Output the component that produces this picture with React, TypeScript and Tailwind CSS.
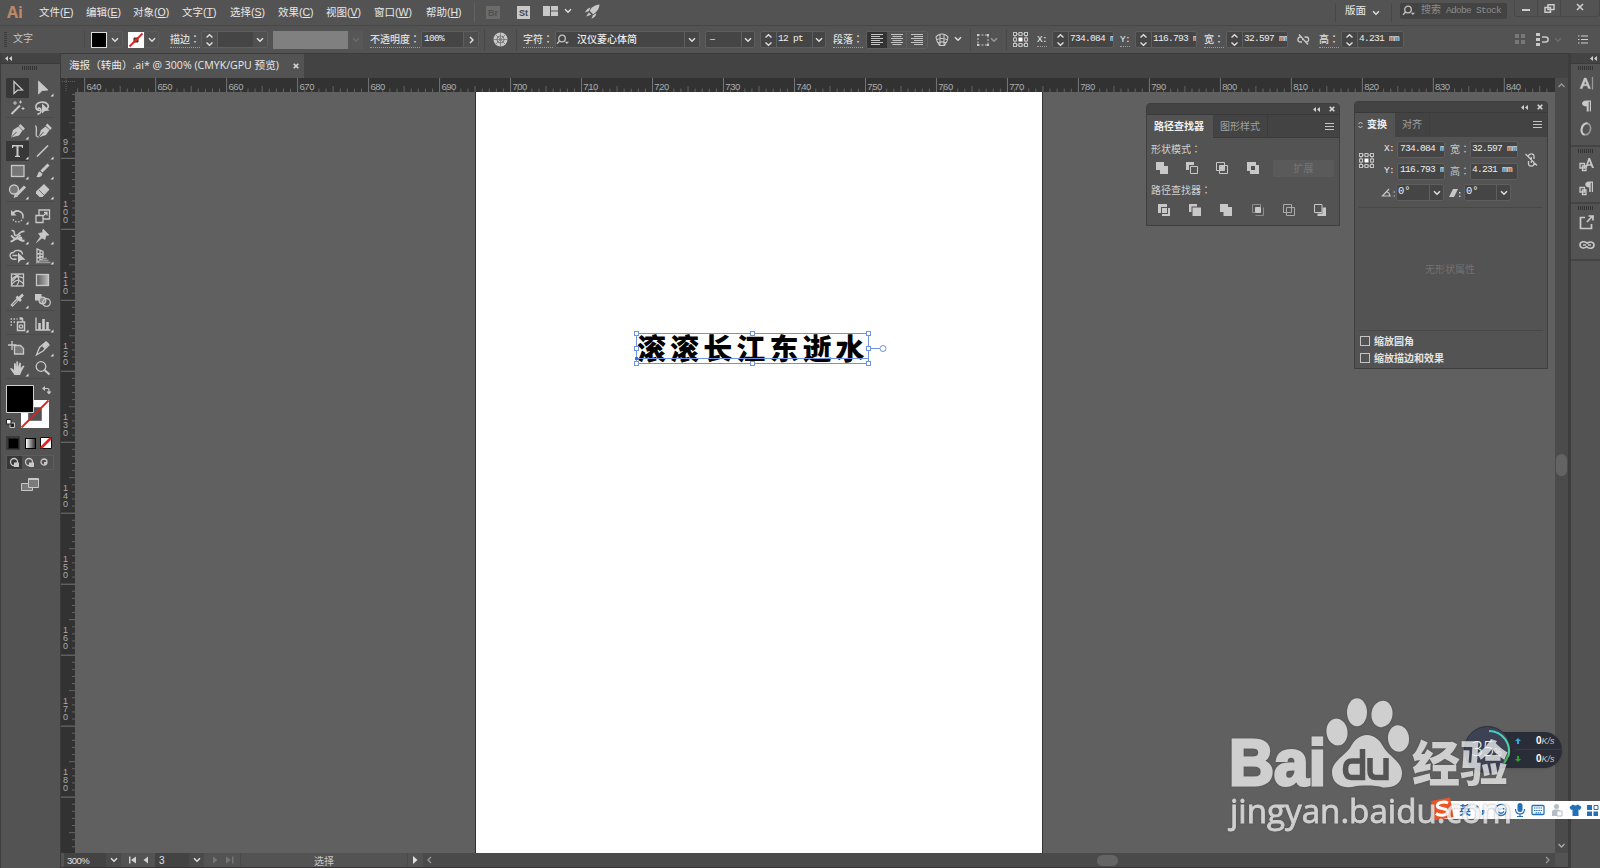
import type { ReactNode } from "react";

interface IconProps {
  size?: number;
  className?: string;
  children: ReactNode;
}

const Icon: React.FC<IconProps> = ({ size = 20, className = "", children }) => (
  <svg width={size} height={size} viewBox={`0 0 ${size} ${size}`} className={`shrink-0 ${className}`} fill="none" stroke="#c8c8c8" strokeWidth="1.3">
    {children}
  </svg>
);

const Chevron: React.FC<{ dim?: boolean }> = ({ dim }) => (
  <svg width="8" height="6" viewBox="0 0 8 6" className="shrink-0" fill="none" stroke={dim ? "#6c6c6c" : "#dedede"} strokeWidth="1.5">
    <path d="M1 1.2L4 4.2L7 1.2" />
  </svg>
);

const Spinner = () => (
  <svg width="15" height="16" viewBox="0 0 15 16" className="shrink-0" fill="none" stroke="#dedede" strokeWidth="1.4">
    <path d="M4.5 5.6L7.5 2.8L10.5 5.6M4.5 10.4L7.5 13.2L10.5 10.4" />
  </svg>
);

const DoubleArrow = () => (
  <svg width="7" height="5" viewBox="0 0 7 5" fill="#d0d0d0">
    <path d="M3 0V5L0 2.5ZM7 0V5L4 2.5Z" />
  </svg>
);

const CloseX = () => (
  <svg width="6" height="6" viewBox="0 0 6 6" stroke="#d8d8d8" strokeWidth="1.6">
    <path d="M.7 .7L5.3 5.3M5.3 .7L.7 5.3" />
  </svg>
);

const SearchGlyph = () => (
  <svg width="14" height="12" viewBox="0 0 14 12" fill="none" stroke="#c4c4c4" strokeWidth="1.3">
    <circle cx="6" cy="4.5" r="3.3" />
    <path d="M3.6 7L1 9.8" />
    <path d="M8.8 7.8H13L10.9 10Z" fill="#c4c4c4" stroke="none" />
  </svg>
);

const RefGrid = () => (
  <svg width="17" height="17" viewBox="0 0 17 17" fill="none" stroke="#c4c4c4" strokeWidth="1">
    {[0, 1, 2].map((r) =>
      [0, 1, 2].map((c) =>
        r === 1 && c === 1 ? (
          <rect key="mid" x="7" y="7" width="3" height="3" fill="#fff" stroke="#fff" />
        ) : (
          <rect key={`${r}${c}`} x={1.5 + c * 5.5} y={1.5 + r * 5.5} width="3" height="3" />
        )
      )
    )}
    <path d="M4.5 3h2.500M10 3h2.500M4.500 14h2.500M10 14h2.500M3 4.500v2.500M3 10v2.500M14 4.500v2.500M14 10v2.500" />
  </svg>
);

const Grip: React.FC<{ className?: string }> = ({ className = "" }) => (
  <div className={`flex gap-[1px] ${className}`}>
    {Array.from({ length: 8 }, (_, i) => (
      <span key={i} className="h-[4px] w-[1px] bg-[#333]" />
    ))}
  </div>
);

// the Traditional face centres the full-width colon in its cell
const Colon = () => <span className="font-['Noto_Sans_CJK_TC',sans-serif]">：</span>;

const Label: React.FC<{ w: string; children: ReactNode }> = ({ w, children }) => (
  <div className={`flex items-center ${w}`}>
    <span className="whitespace-nowrap border-b border-dotted border-[#9a9a9a] text-[10px] leading-[14px] font-medium text-[#dedede]">
      {children}
      <Colon />
    </span>
  </div>
);

const mono = "font-['Liberation_Mono','Noto_Sans_CJK_SC',monospace] text-[9.5px] tracking-[-0.7px] text-[#eee]";
const field = "flex h-[17px] items-center overflow-hidden whitespace-nowrap rounded-[2px] border border-[#5e5e5e] bg-[#454545]";

const menus = [
  { name: "文件", key: "F", w: "w-[47px]" },
  { name: "编辑", key: "E", w: "w-[47px]" },
  { name: "对象", key: "O", w: "w-[49px]" },
  { name: "文字", key: "T", w: "w-[48px]" },
  { name: "选择", key: "S", w: "w-[48px]" },
  { name: "效果", key: "C", w: "w-[48px]" },
  { name: "视图", key: "V", w: "w-[48px]" },
  { name: "窗口", key: "W", w: "w-[52px]" },
  { name: "帮助", key: "H", w: "w-[48px]" },
];

const MenuBar = () => (
  <div className="flex h-[25px] items-center bg-[#535353] [&>*]:shrink-0">
    <div className="w-[39px] pb-[2px] pl-[7px] font-['Open_Sans',sans-serif] text-[16px] font-bold leading-none text-[#bf8968]">Ai</div>
    {menus.map((m) => (
      <div key={m.key} className={`${m.w} whitespace-nowrap text-[10.500px] text-[#e8e8e8]`}>
        {m.name}(<span className="underline">{m.key}</span>)
      </div>
    ))}
    <div className="h-[19px] w-[12px] border-l border-[#616161]" />
    <div className="h-[13px] w-[14px] bg-[#6b6b6b] text-center text-[9px] font-bold leading-[14px] text-[#505050]">Br</div>
    <div className="ml-[17px] h-[13px] w-[13px] bg-[#c8c8c8] text-center text-[9px] font-bold leading-[14px] text-[#444]">St</div>
    <svg width="15" height="11" viewBox="0 0 15 11" className="ml-[13px] mb-[2px]" fill="#c8c8c8">
      <path d="M0 0H7V10H0ZM8 0H15V4.5H8ZM8 5.5H15V10H8Z" />
    </svg>
    <div className="ml-[6px] w-[21px] pb-[3px]"><Chevron /></div>
    <svg width="15" height="15" viewBox="0 0 15 15" className="mb-[2px]" fill="#c8c8c8">
      <path d="M14.5 .5C9.5 1 6.8 3.2 4.6 6.8L8 10.3C11.8 8 14 5.400 14.500 .500ZM5.500 3.500C2.800 4 1.200 6 0 8.500L3.700 7.200ZM11.300 9.200C11 12 9.200 13.600 6.500 14.800L7.800 11.200ZM3.800 8.500L1 12.500L6.300 10.800Z" />
    </svg>
    <div className="ml-auto h-[19px] w-[10px] border-l border-[#484848]" />
    <div className="mb-[4px] w-[27px] text-[10.500px] text-[#e8e8e8]">版面</div>
    <div className="w-[19px]"><Chevron /></div>
    <div className="h-[19px] w-[9px] border-l border-[#484848]" />
    <div className="mb-[3px] flex h-[16px] w-[107px] items-center rounded-[2px] bg-[#434343] pl-[2px]">
      <SearchGlyph />
      <span className="ml-[5px] whitespace-nowrap pb-[1px] font-['Liberation_Mono','Noto_Sans_CJK_SC',monospace] text-[9.500px] tracking-[-0.700px] text-[#8d8d8d]">
        <span className="text-[10px] tracking-normal">搜索</span> Adobe Stock
      </span>
    </div>
    <div className="ml-[7px] flex h-[17px] w-[86px] self-start rounded-b-[3px] border border-t-0 border-[#484848]">
      <div className="flex w-[23px] items-center justify-center border-r border-[#484848]">
        <span className="mt-[3px] h-[2px] w-[8px] bg-[#ccc]" />
      </div>
      <div className="flex w-[23px] items-center justify-center border-r border-[#484848]">
        <svg width="11" height="9" viewBox="0 0 11 9" fill="#535353" stroke="#ccc" strokeWidth="1.500">
          <path d="M4 .800H10V5.500H4ZM1 3.500H6.500V8.200H1Z" />
        </svg>
      </div>
      <div className="flex flex-1 items-center justify-center pb-[2px]">
        <svg width="8" height="8" viewBox="0 0 8 8" stroke="#ccc" strokeWidth="1.600">
          <path d="M1 1L7 7M7 1L1 7" />
        </svg>
      </div>
    </div>
  </div>
);

const AlignIcon: React.FC<{ at: "left" | "center" | "right" }> = ({ at }) => {
  const short = at === "left" ? 0 : at === "center" ? 1.5 : 3;
  return (
    <svg width="12" height="12" viewBox="0 0 12 12" stroke="#c4c4c4" strokeWidth="1">
      {[0.5, 4.5, 8.5].map((y) => (
        <path key={y} d={`M0 ${y}H12M${short} ${y + 2}h9`} />
      ))}
    </svg>
  );
};

const ControlBar = () => (
  <div className="flex h-[28px] items-center border-t border-[#474747] bg-[#535353] [&>*]:shrink-0">
    <div className="flex w-[13px] flex-col gap-[1px] pl-[4px]">
      {Array.from({ length: 8 }, (_, i) => (
        <span key={i} className="h-[1px] w-[3px] bg-[#3c3c3c]" />
      ))}
    </div>
    <div className="w-[71px] pb-[2px] text-[10px] text-[#c4c4c4]">文字</div>
    <div className="h-[17px] w-[7px] border-l border-[#4a4a4a]" />
    <div className="h-[16px] w-[16px] border border-[#ddd] bg-black" />
    <div className="mr-[5px] flex h-[17px] w-[16px] items-center justify-center rounded-r-[2px] border border-[#5b5b5b]"><Chevron /></div>
    <svg width="16" height="16" viewBox="0 0 16 16">
      <path d="M0 0H16V16H0Z" fill="#fff" />
      <path d="M6 6H10V10H6Z" fill="#777" stroke="#222" />
      <path d="M1.500 14.500L14.500 1.500" stroke="#d8231f" strokeWidth="1.800" />
    </svg>
    <div className="mr-[11px] flex h-[17px] w-[15px] items-center justify-center rounded-r-[2px] border border-[#5b5b5b]"><Chevron /></div>
    <Label w="w-[31px]">描边</Label>
    <div className={`${field} mr-[5px] w-[67px]`}>
      <div className="bg-[#505050]"><Spinner /></div>
      <div className="h-full w-[36px] border-l border-[#5e5e5e]" />
      <div className="flex h-full flex-1 items-center justify-center bg-[#505050]"><Chevron /></div>
    </div>
    <div className="h-[18px] w-[75px] bg-[#808080]" />
    <div className="mr-[7px] flex h-[18px] w-[15px] items-center justify-center bg-[#575757]"><Chevron dim /></div>
    <Label w="w-[51px]">不透明度</Label>
    <div className={`${field} mr-[5px] w-[58px]`}>
      <span className={`${mono} w-[41px] pb-[1px] pl-[2px]`}>100%</span>
      <div className="flex h-full flex-1 items-center justify-center border-l border-[#5e5e5e] bg-[#4e4e4e]">
        <svg width="5" height="8" viewBox="0 0 5 8" fill="none" stroke="#ddd" strokeWidth="1.500"><path d="M1 1L4 4L1 7" /></svg>
      </div>
    </div>
    <div className="h-[22px] w-[9px] border-l border-[#484848]" />
    <svg width="15" height="15" viewBox="0 0 15 15" className="mr-[8px]">
      <circle cx="7.500" cy="7.500" r="7" fill="#c8c8c8" />
      <path d="M7.500 0V15M0 7.500H15M2.500 2.500L12.500 12.500M12.500 2.500L2.500 12.500" stroke="#777" strokeWidth=".8" />
      <circle cx="7.500" cy="7.500" r="3.600" fill="none" stroke="#777" />
    </svg>
    <div className="h-[22px] w-[7px] border-l border-[#484848]" />
    <Label w="w-[32px]">字符</Label>
    <div className={`${field} mr-[5px] w-[145px]`}>
      <div className="w-[21px]"><SearchGlyph /></div>
      <span className="w-[107px] text-[10px] font-medium text-[#eee]">汉仪菱心体简</span>
      <div className="flex h-full flex-1 items-center justify-center border-l border-[#5e5e5e]"><Chevron /></div>
    </div>
    <div className={`${field} mr-[5px] w-[50px]`}>
      <span className="w-[35px] pl-[4px] text-[9px] leading-none text-[#eee]">–</span>
      <div className="flex h-full flex-1 items-center justify-center border-l border-[#5e5e5e]"><Chevron /></div>
    </div>
    <div className={`${field} mr-[7px] w-[66px]`}>
      <Spinner />
      <span className={`${mono} flex h-full w-[36px] items-center border-l border-[#5e5e5e] pb-[1px] pl-[1px]`}>12 pt</span>
      <div className="flex h-full flex-1 items-center justify-center border-l border-[#5e5e5e]"><Chevron /></div>
    </div>
    <Label w="w-[33px]">段落</Label>
    <div className="mr-[7px] flex h-[18px] w-[62px] overflow-hidden rounded-[2px] border border-[#5e5e5e] [&>*]:flex [&>*]:flex-1 [&>*]:items-center [&>*]:justify-center">
      <div className="bg-[#333]"><AlignIcon at="left" /></div>
      <div className="border-r border-[#5e5e5e]"><AlignIcon at="center" /></div>
      <div><AlignIcon at="right" /></div>
    </div>
    <svg width="14" height="14" viewBox="0 0 14 14" fill="none" stroke="#c8c8c8" strokeWidth="1.100">
      <path d="M1 4C4 0 10 0 13 4L12 8L9.500 12.500H4.500L2 8ZM1.500 7C4 5 10 5 12.500 7M5 1.500V12M9 1.500V12M3 10C5 8.500 9 8.500 11 10" />
    </svg>
    <div className="mr-[8px] ml-[5px] w-[8px] pb-[2px]"><Chevron /></div>
    <div className="h-[22px] w-[6px] border-l border-[#484848]" />
    <svg width="14" height="14" viewBox="0 0 14 14" fill="none" stroke="#c8c8c8">
      <rect x="2" y="2" width="10" height="10" strokeDasharray="2 1.500" />
      <path d="M1 1h2v2H1ZM11 1h2v2H11ZM1 11h2v2H1ZM11 11h2v2H11Z" fill="#c8c8c8" stroke="none" />
    </svg>
    <svg width="8" height="6" viewBox="0 0 8 6" className="mr-[8px]" fill="none" stroke="#999" strokeWidth="1.500"><path d="M1 1.200L4 4.200L7 1.200" /></svg>
    <div className="h-[22px] w-[6px] border-l border-[#484848]" />
    <div className="w-[25px]"><RefGrid /></div>
    <div className="flex w-[15px]"><span className={`${mono} border-b border-dotted border-[#9a9a9a] leading-[13px]`}>X:</span></div>
    <div className={`${field} mr-[6px] w-[62px]`}><Spinner /><span className={`${mono} flex h-full items-center border-l border-[#5e5e5e] pb-[1px] pl-[1px]`}>734.084 m</span></div>
    <div className="flex w-[15px]"><span className={`${mono} border-b border-dotted border-[#9a9a9a] leading-[13px]`}>Y:</span></div>
    <div className={`${field} mr-[7px] w-[62px]`}><Spinner /><span className={`${mono} flex h-full items-center border-l border-[#5e5e5e] pb-[1px] pl-[1px]`}>116.793 m</span></div>
    <Label w="w-[22px]">宽</Label>
    <div className={`${field} mr-[9px] w-[62px]`}><Spinner /><span className={`${mono} flex h-full items-center border-l border-[#5e5e5e] pb-[1px] pl-[1px]`}>32.597 mm</span></div>
    <Icon size={13} className="mr-[9px]">
      <path d="M5 4H3.500C0 4 0 9 3.500 9H5M7.500 4H9C12.500 4 12.500 9 9 9H8M2 1.500L11 11.500M5 6.500H7" />
    </Icon>
    <Label w="w-[22px]">高</Label>
    <div className={`${field} w-[63px]`}><Spinner /><span className={`${mono} flex h-full items-center border-l border-[#5e5e5e] pb-[1px] pl-[1px]`}>4.231 mm</span></div>
    <svg width="11" height="11" viewBox="0 0 11 11" className="ml-auto mr-[10px]" fill="#777">
      <path d="M0 0h4v4H0ZM6 0h4v4H6ZM0 6h4v4H0ZM6 6h4v4H6Z" />
    </svg>
    <svg width="13" height="13" viewBox="0 0 13 13" fill="none" stroke="#c8c8c8" strokeWidth="1.500">
      <path d="M0 0h4v3H0ZM0 5h4v3H0ZM0 10h4v3H0Z" fill="#c8c8c8" stroke="none" />
      <path d="M6 4H9.500C13 4 13 9 9.500 9H6" />
    </svg>
    <div className="mr-[16px] ml-[5px] w-[8px]"><Chevron dim /></div>
    <svg width="11" height="9" viewBox="0 0 11 9" className="mr-[11px]" stroke="#d0d0d0" strokeWidth="1.200">
      <path d="M0 1H1.500M3 1H10M0 4.500H1.500M3 4.500H10M0 8H1.500M3 8H10" />
    </svg>
  </div>
);

const g = "#c8c8c8";

const tools: Record<string, ReactNode> = {
  select: <path d="M6.500 3.500V15.500L10 12.200L15 12Z" />,
  direct: <path d="M6 3V16L9.700 12.500L15.500 12Z" fill={g} stroke={g} strokeWidth=".8" />,
  wand: (
    <>
      <path d="M4 16L12.500 7.500" strokeWidth="2" />
      <path d="M7.500 3V7M5.500 5H9.500M13 2.500V5.500M11.500 4H14.500M15.500 9V12M14 10.500H17" strokeWidth="1" />
    </>
  ),
  lasso: (
    <>
      <path d="M8 12.500C2 12.500 1.500 5 8.500 4.200C15 3.500 17.500 8 14.500 10.500M6 12C4 10 8 9 8.500 12C9 15 6.500 16.500 5 15.500" strokeWidth="1.600" />
      <path d="M9.500 5.500V15.500L12.500 13L17 12.500Z" fill={g} stroke="none" />
    </>
  ),
  pen: (
    <>
      <path d="M3.500 16.500L5.500 9L11 5.500L15 9.500L11.500 14.500Z" fill={g} stroke="none" />
      <path d="M12 4L16.500 8.500" strokeWidth="2.500" />
      <path d="M4 16L9 11" stroke="#535353" strokeWidth="1" />
    </>
  ),
  curve: (
    <>
      <path d="M6 16.500L8.500 9L13 5.500L17 9L13.500 14Z" fill={g} stroke="none" />
      <path d="M14 3.500L18.500 8" strokeWidth="2.500" />
      <path d="M6.500 16L11 11" stroke="#535353" strokeWidth="1" />
      <path d="M6 16C1 16 6 9 3 4.500" />
    </>
  ),
  type: <path d="M4.500 4H15.500V7H14.500L14 5.500H11V14.500L12.500 15V16H7.500V15L9 14.500V5.500H6L5.500 7H4.500Z" fill={g} stroke="none" />,
  line: <path d="M4.500 15.500L15.500 4.500" strokeWidth="1.600" />,
  rect: <rect x="4" y="4.500" width="12.500" height="11" fill="#777" />,
  brush: (
    <>
      <path d="M9 10.500L16 3.500" strokeWidth="3" />
      <path d="M3.500 15.500C6 15 4.500 11 7.500 10.500L10 13C9.500 16 6 17 3.500 15.500Z" fill={g} stroke="none" />
    </>
  ),
  shaper: (
    <>
      <circle cx="6.500" cy="8.500" r="4.500" fill="#777" />
      <path d="M9 14L17.500 5.500" strokeWidth="3" />
      <path d="M6 17L7.500 12.500L10.500 15.500Z" fill={g} stroke="none" />
    </>
  ),
  eraser: (
    <>
      <path d="M11.500 3L17 8.500L10 16H7L3.500 12.500V10.500Z" fill={g} stroke="none" />
      <path d="M6.500 9L11.500 14" stroke="#666" strokeWidth=".9" />
    </>
  ),
  rotate: (
    <>
      <path d="M5 8C8 2.500 16 5 15.500 11" strokeWidth="1.600" />
      <path d="M15.500 11C15 17 7 17.500 5 12.500" strokeDasharray="1.500 1.500" />
      <path d="M3.500 4V9.500H9Z" fill={g} stroke="none" />
    </>
  ),
  scale: <path d="M3.500 9.500H10.500V16.500H3.500ZM6.500 9.500V4H17V13H10.500M10.500 10L14.500 6.500M11.500 6.500H14.500V9.500" />,
  width: (
    <>
      <path d="M4 4.500C9 4 5 9.500 8.500 9.500C11.500 9.500 12 4.500 17 5.500" strokeWidth="1.600" />
      <path d="M3 15.500C6 15.500 7 12 10 12.500C13 13 13 15.500 17 14.500" strokeWidth="2" />
      <path d="M3.500 9.500L7.500 13L13 9" strokeWidth="1.800" />
      <circle cx="13" cy="12.500" r="1.900" fill={g} stroke="none" />
    </>
  ),
  pin: <path d="M10.500 3L16.500 9L13.500 9.500L12.500 13.500L9.500 12L4 16.500L8 10.500L6 7.500L10 6.500Z" fill={g} stroke={g} strokeWidth=".6" />,
  shape: (
    <>
      <path d="M9 13C1 14.500 1 6 6 6.500C8 3 15 4 15 8.500M5 9.500H10" />
      <path d="M10.500 6.500V17L13.500 14L18 13.800Z" fill={g} stroke="none" />
    </>
  ),
  persp: (
    <>
      <path d="M4.500 3V16.500L10.500 12.500V5.500ZM4.500 7.500L10.500 8M4.500 12L10.500 10.500M7.500 4.500V14.500" />
      <path d="M4.500 16.500H18M7 14.500H16M10 12.500H14.500" stroke="#999" />
    </>
  ),
  mesh: (
    <>
      <rect x="4" y="4" width="12" height="12" />
      <path d="M4 10C7 5 11 6 16 8M4 15C8 9 12 9 16 14M7 4C13 8 12 12 9 16M12 4C8 7 7 10 4.500 11" strokeWidth="1.200" />
    </>
  ),
  gradient: <rect x="4" y="4.500" width="12" height="11" fill="url(#tool-grad)" />,
  dropper: (
    <>
      <path d="M4 16L11 8.500" strokeWidth="3" />
      <path d="M5.200 14.800L10 10" stroke="#535353" strokeWidth="1" />
      <path d="M9 6.500L13.500 11M12 8L15.500 4.500" strokeWidth="2.600" />
    </>
  ),
  blend: (
    <>
      <path d="M2.500 4H9V10.500H2.500Z" fill={g} stroke="none" />
      <circle cx="10" cy="10.500" r="3.300" fill="#888" />
      <circle cx="14" cy="12.500" r="3.800" />
    </>
  ),
  spray: (
    <>
      <path d="M10 8H17V16.500H10ZM12 5H15V8M12 4H15" strokeWidth="1.500" />
      <circle cx="13.500" cy="12.500" r="1.700" />
      <path d="M3 5h1.500M6 5h1.500M9 5h1M3 8h1.500M6 8h1.500M3 11h1.500" strokeWidth="1.600" />
    </>
  ),
  graph: (
    <>
      <path d="M3.500 3.500V16H18" />
      <path d="M7 16V9M11 16V5M15 16V8" strokeWidth="2.600" />
    </>
  ),
  artboard: (
    <>
      <path d="M7 7.500H13L16 10.500V16H7Z" fill="#777" />
      <path d="M4.500 3V12M.5 7H9" strokeWidth="1.300" />
    </>
  ),
  slice: (
    <>
      <path d="M4 17L7 9.500L13.500 4L16.500 7L10.500 13Z" />
      <path d="M9.500 8L14 3.500L16.500 6L12 11Z" fill={g} stroke="none" />
    </>
  ),
  hand: <path d="M7 17L2.500 10.500L4 10L6.500 12V5.500L8 5L8.800 9V3.500H10.500L10.800 9L12 4.500L13.500 5L13.300 10L15.500 7.500L17 8L14 13.500L12.500 17Z" fill={g} stroke="none" />,
  zoom: (
    <>
      <circle cx="8.500" cy="8.500" r="4.800" />
      <path d="M12 12L17 16.500" strokeWidth="2" />
    </>
  ),
};

// name prefixed with "." has no flyout corner
const toolGroups = [
  { pad: "pt-[7px] h-[47px]", rows: [[".select", "direct"], [".wand", ".lasso"]] },
  { pad: "pt-[3px] h-[84px]", rows: [["pen", ".curve"], ["type", "line"], ["rect", "brush"], ["shaper", "eraser"]] },
  { pad: "pt-[4px] h-[64px]", rows: [["rotate", ".scale"], ["width", "pin"], ["shape", "persp"]] },
  { pad: "pt-[4px] h-[45px]", rows: [[".mesh", ".gradient"], ["dropper", ".blend"]] },
  { pad: "pt-[3px] h-[24px]", rows: [["spray", "graph"]] },
  { pad: "pt-[3px] h-[44px]", rows: [[".artboard", "slice"], ["hand", ".zoom"]] },
];

const ToolButton: React.FC<{ id: string }> = ({ id }) => {
  const plain = id.startsWith(".");
  const name = plain ? id.slice(1) : id;
  const active = name === "select" || name === "type";
  return (
    <div className={`flex h-[20px] w-[23px] items-center justify-center rounded-[1px] ${active ? "bg-[#373737]" : ""}`}>
      <svg width="23" height="20" viewBox="-1.500 0 23 20" fill="none" stroke={g} strokeWidth="1.300">
        <defs>
          <linearGradient id="tool-grad"><stop stopColor="#5a5a5a" /><stop offset="1" stopColor="#bbb" /></linearGradient>
        </defs>
        {tools[name]}
        {!plain && <path d="M21 15.500V18.500H18Z" fill="#ddd" stroke="none" />}
      </svg>
    </div>
  );
};

const Toolbox = () => (
  <div className="flex w-[60px] shrink-0 flex-col border-l border-[#3d3d3d] bg-[#535353]">
    <div className="h-[11px] shrink-0 border-b border-[#3b3b3b] bg-[#434343] pt-[3px] pl-[4px]"><DoubleArrow /></div>
    <Grip className="mt-[2px] h-[5px] shrink-0 pl-[21px]" />
    {toolGroups.map((group, i) => (
      <div key={i} className={`ml-[5px] w-[48px] shrink-0 border-b border-[#4a4a4a] ${group.pad}`}>
        {group.rows.map((row) => (
          <div key={row[0]} className="flex justify-between"><ToolButton id={row[0]} /><ToolButton id={row[1]} /></div>
        ))}
      </div>
    ))}
    <svg width="50" height="48" viewBox="0 0 50 48" className="mt-[5px] ml-[4px] shrink-0">
      <path d="M16 16H44V44H16Z" fill="#fff" />
      <path d="M23.500 23.500H36.500V36.500H23.500Z" fill="#535353" stroke="#777" />
      <path d="M16.500 43.500L43.500 16.500" stroke="#d8231f" strokeWidth="1.800" />
      <path d="M1.500 1.500H28.500V28.500H1.500Z" fill="#000" stroke="#d0d0d0" />
      <path d="M39 4.500H42.500Q44 4.500 44 6V8.500" fill="none" stroke={g} strokeWidth="1.200" />
      <path d="M40 2V7L37 4.500ZM41.500 7.500H46.500L44 10.500Z" fill={g} />
      <path d="M5 39H9.500V43.500H5Z" fill="#222" stroke={g} />
      <path d="M1.500 35.500H6V40H1.500Z" fill="#fff" stroke="#222" />
    </svg>
    <div className="mt-[4px] ml-[5px] flex h-[14px] w-[48px] shrink-0 items-center justify-between">
      <div className="flex h-[14px] w-[14px] items-center justify-center bg-[#3a3a3a]"><span className="h-[11px] w-[11px] border border-[#222] bg-black" /></div>
      <span className="h-[11px] w-[11px] border border-black bg-gradient-to-r from-white to-[#333]" />
      <svg width="12" height="12" viewBox="0 0 12 12" className="mr-[2px]">
        <path d="M.5 .5H11.500V11.500H.5Z" fill="#fff" stroke="#111" />
        <path d="M1 11L11 1" stroke="#e01f1f" strokeWidth="2.600" />
      </svg>
    </div>
    <div className="mt-[5px] ml-[5px] flex h-[15px] w-[48px] shrink-0 border border-[#5c5c5c]">
      {["bg-[#373737]", "bg-[#505050]", "bg-[#505050]"].map((bg, i) => (
        <div key={i} className={`flex flex-1 items-center justify-center ${bg}`}>
          <Icon size={12}>
            <circle cx="5" cy="5" r={i === 2 ? 3 : 3.500} />
            {i < 2 ? <path d="M5 5.500H10V10H5Z" fill={g} stroke="none" /> : <path d="M5 5H8A3 3 0 0 1 5 8Z" fill={g} stroke="none" />}
          </Icon>
        </div>
      ))}
    </div>
    <svg width="19" height="14" viewBox="0 0 19 14" className="mt-[8px] ml-[20px] shrink-0" fill="#7a7a7a" stroke={g}>
      <path d="M.5 5.500H11.500V12.500H.5Z" />
      <path d="M7.500 .5H17.500V9.500H7.500Z" />
      <path d="M7.500 1.500H17.500" />
    </svg>
  </div>
);

const PITCH = 7.098;

const HRuler = () => (
  <svg width="1494" height="14" viewBox="61 78 1494 14" className="shrink-0 bg-[#323232]">
    <path d="M66 78V92M62 81.500H75" stroke="#606060" strokeDasharray="1 1" />
    {Array.from({ length: 208 }, (_, i) => {
      const x = 84.700 + (i - 1) * PITCH;
      const n = i - 1;
      const top = n % 10 === 0 ? 78 : n % 5 === 0 ? 86 : 88.500;
      return <path key={i} d={`M${x} ${top}V92`} stroke={n % 10 === 0 ? "#767676" : "#636363"} />;
    })}
    {Array.from({ length: 21 }, (_, i) => (
      <text key={i} x={86.500 + i * PITCH * 10} y="90" fontSize="9.500" textLength="15" fill="#ababab" className="font-['Liberation_Sans',sans-serif]">
        {640 + i * 10}
      </text>
    ))}
  </svg>
);

const VRuler = () => (
  <svg width="14" height="761" viewBox="61 92 14 761" className="shrink-0 bg-[#323232]">
    {Array.from({ length: 108 }, (_, i) => {
      const n = i - 9;
      const y = 158.300 + n * PITCH;
      const x = n % 10 === 0 ? 61 : n % 5 === 0 ? 69 : 72;
      return <path key={i} d={`M${x} ${y}H75`} stroke={n % 10 === 0 ? "#767676" : "#636363"} />;
    })}
    {Array.from({ length: 10 }, (_, i) => {
      const digits = String(90 + i * 10).split("");
      return digits.map((d, k) => (
        <text key={`${i}-${k}`} x="63" y={152.500 + i * PITCH * 10 - (digits.length - 1 - k) * 8} fontSize="9" fill="#ababab" className="font-['Liberation_Sans',sans-serif]">
          {d}
        </text>
      ));
    })}
  </svg>
);

const StatusBar = () => (
  <div className="flex h-[15px] shrink-0 items-center overflow-hidden border-b border-[#3a3236] bg-[#535353] text-[10px] text-[#e0e0e0] [&>*]:shrink-0">
    <div className="ml-[3px] h-full w-[42px] bg-[#434343] pl-[3px] text-[9.500px] leading-[15px] tracking-[-0.5px]">300%</div>
    <div className="flex h-full w-[15px] items-center justify-center bg-[#4a4a4a]"><Chevron /></div>
    <svg width="34" height="10" viewBox="0 0 34 10" fill="#d0d0d0">
      <path d="M8 1.500H9.500V8.500H8ZM15 1.500V8.500L10 5ZM27 1.500V8.500L22.500 5Z" />
    </svg>
    <div className="h-full w-[34px] bg-[#434343] pl-[4px] leading-[15px]">3</div>
    <div className="flex h-full w-[15px] items-center justify-center bg-[#4a4a4a]"><Chevron /></div>
    <svg width="36" height="10" viewBox="0 0 36 10" fill="#757575">
      <path d="M9 1.500V8.500L13.500 5ZM22 1.500V8.500L27 5ZM28 1.500H29.500V8.500H28Z" />
    </svg>
    <div className="h-full w-[168px] border-x border-[#4a4a4a] pl-[73px] leading-[18px] text-[#c8c8c8]">选择</div>
    <svg width="15" height="10" viewBox="0 0 15 10" fill="#e0e0e0"><path d="M5 1V9L9.500 5Z" /></svg>
    <div className="flex h-full flex-1 items-center bg-[#4a4a4a] pl-[4px]">
      <svg width="5" height="8" viewBox="0 0 5 8" fill="none" stroke="#999" strokeWidth="1.300"><path d="M4 1L1 4L4 7" /></svg>
      <div className="ml-[665px] h-[11px] w-[21px] rounded-full bg-[#646464]" />
      <svg width="5" height="8" viewBox="0 0 5 8" className="mr-[5px] ml-auto" fill="none" stroke="#999" strokeWidth="1.300"><path d="M1 1L4 4L1 7" /></svg>
    </div>
    <div className="w-[13px]" />
  </div>
);

const PathOp: React.FC<{ kind: string }> = ({ kind }) => (
  <svg width="14" height="14" viewBox="0 0 14 14" fill="none" stroke={g}>
    {kind === "unite" && <path d="M1 1H9V5H13V13H5V9H1Z" fill={g} stroke="none" />}
    {kind === "minus" && (<><path d="M1 1H9V4H4V9H1Z" fill={g} stroke="none" /><path d="M5.500 5.500H12.500V12.500H5.500Z" /></>)}
    {kind === "intersect" && (<><path d="M1.500 1.500H9.500V9.500H1.500ZM4.500 4.500H12.500V12.500H4.500Z" /><path d="M5.500 5.500H8.500V8.500H5.500Z" fill={g} /></>)}
    {kind === "exclude" && <path d="M1 1H10V4H13V13H4V10H1ZM5 5V9H9V5Z" fill={g} fillRule="evenodd" stroke="none" />}
    {kind === "divide" && (<><path d="M1 1H10V4H4V10H1ZM13 5V13H5V11H11V5Z" fill={g} stroke="none" /><path d="M5 5H10V10H5Z" fill={g} stroke="none" /></>)}
    {kind === "trim" && <path d="M1 1H9V3.500H3.500V9H1ZM4.500 4.500H13V13H4.500Z" fill={g} stroke="none" />}
    {kind === "merge" && <path d="M1 1H9V4H13V13H4.500V9H1Z" fill={g} stroke="none" />}
    {kind === "crop" && (<><path d="M1.500 1.500H9.500V4M4 9.500H1.500V1.500M12.500 4.500V12.500H4.500" stroke="#8d8d8d" /><path d="M4.500 4.500H9.500V9.500H4.500Z" fill={g} /></>)}
    {kind === "outline" && <path d="M1.500 1.500H9.500V9.500H1.500ZM4.500 4.500H12.500V12.500H4.500Z" stroke="#aaa" />}
    {kind === "back" && (<><path d="M9.500 4.500H13V13H4.500V10.500H9.500Z" fill={g} stroke="none" /><path d="M1.500 1.500H9V9.500H1.500Z" /></>)}
  </svg>
);

const PanelHeader = () => (
  <div className="flex h-[11px] items-center justify-end gap-[9px] rounded-t-[3px] border-b border-[#393939] bg-[#434343] pr-[4px]">
    <DoubleArrow />
    <CloseX />
  </div>
);

const MenuLines = () => (
  <svg width="9" height="7" viewBox="0 0 9 7" className="ml-auto mr-[5px]" stroke="#c4c4c4"><path d="M0 .5H9M0 3.500H9M0 6.500H9" /></svg>
);

const Pathfinder = () => (
  <div className="absolute top-[103px] left-[1146px] h-[123px] w-[194px] rounded-t-[4px] border border-[#3e3e3e] bg-[#535353]">
    <PanelHeader />
    <div className="flex h-[23px] items-stretch border-b border-[#3b3b3b] bg-[#434343] text-[10px]">
      <div className="-mb-px w-[66px] bg-[#535353] pl-[7px] font-bold leading-[23px] text-[#eee]">路径查找器</div>
      <div className="w-[55px] border-r border-[#3b3b3b] pl-[7px] leading-[23px] text-[#a0a0a0]">图形样式</div>
      <div className="flex flex-1 items-center"><MenuLines /></div>
    </div>
    <div className="h-[19px] pt-[3px] pl-[4px] text-[10px] leading-[16px] text-[#d0d0d0]">形状模式<Colon /></div>
    <div className="flex h-[22px] items-center pl-[8px]">
      <div className="flex w-[118px] gap-[16.200px]">
        {["unite", "minus", "intersect", "exclude"].map((k) => <PathOp key={k} kind={k} />)}
      </div>
      <div className="h-[17px] w-[61px] rounded-[2px] bg-[#5a5a5a] text-center text-[10px] leading-[17px] text-[#767676]">扩展</div>
    </div>
    <div className="h-[21px] pt-[1px] pl-[4px] text-[10px] leading-[19px] text-[#d0d0d0]">路径查找器<Colon /></div>
    <div className="flex h-[20px] items-center gap-[17.200px] pl-[10px]">
      {["divide", "trim", "merge", "crop", "outline", "back"].map((k) => <PathOp key={k} kind={k} />)}
    </div>
  </div>
);

const Transform = () => (
  <div className="absolute top-[101px] left-[1354px] flex h-[268px] w-[194px] flex-col rounded-t-[4px] border border-[#3e3e3e] bg-[#535353]">
    <PanelHeader />
    <div className="flex h-[24px] shrink-0 items-stretch border-b border-[#434343] bg-[#434343] text-[10px]">
      <div className="-mb-px flex w-[40px] items-center bg-[#535353] pb-[1px] pl-[3px] text-[#eee]">
        <svg width="5" height="8" viewBox="0 0 5 8" className="mr-[4px]" fill="none" stroke="#ccc"><path d="M.5 3L2.500 1L4.500 3M.5 5L2.500 7L4.500 5" /></svg>
        <span className="font-bold">变换</span>
      </div>
      <div className="w-[35px] border-r border-[#3e3e3e] pl-[7px] leading-[23px] text-[#a0a0a0]">对齐</div>
      <div className="flex flex-1 items-center"><MenuLines /></div>
    </div>
    <div className="flex h-[70px] shrink-0 pt-[3px] pl-[3px]">
      <div className="w-[22px] pt-[12px]"><RefGrid /></div>
      <div className="flex w-[138px] flex-col gap-[4.500px] pt-[1px]">
        <div className="flex items-center">
          <span className={`${mono} w-[17px] pl-[4px] text-[#c4c4c4]`}>X:</span>
          <div className={`${field} mr-[5px] w-[48px] pb-[1px] pl-[2px] ${mono}`}>734.084 m</div>
          <span className="w-[20px] text-[10px] leading-none whitespace-nowrap text-[#c4c4c4]">宽<Colon /></span>
          <div className={`${field} w-[48px] pb-[1px] pl-[1px] ${mono}`}>32.597 mm</div>
        </div>
        <div className="flex items-center">
          <span className={`${mono} w-[17px] pl-[4px] text-[#c4c4c4]`}>Y:</span>
          <div className={`${field} mr-[5px] w-[48px] pb-[1px] pl-[2px] ${mono}`}>116.793 m</div>
          <span className="w-[20px] text-[10px] leading-none whitespace-nowrap text-[#c4c4c4]">高<Colon /></span>
          <div className={`${field} w-[48px] pb-[1px] pl-[1px] ${mono}`}>4.231 mm</div>
        </div>
        <div className="flex items-center">
          <svg width="16" height="10" viewBox="-1 0 16 10" fill="none" stroke={g} strokeWidth="1.200"><path d="M8 1L1.500 8H10M6 4Q9 5 8.500 8M12.500 4h1.500M12.500 8h1.500" /></svg>
          <div className={`${field} mr-[4px] w-[48px]`}>
            <span className="w-[32px] pb-[2px] pl-[1px] font-['Liberation_Mono',monospace] text-[10.500px] text-[#eee]">0°</span>
            <div className="flex h-full flex-1 items-center justify-center border-l border-[#5e5e5e]"><Chevron /></div>
          </div>
          <svg width="16" height="10" viewBox="0 0 16 10" fill={g}><path d="M5 1H10L6 9H1ZM11 4h1.500v1.500H11ZM11 7.500h1.500V9H11Z" /></svg>
          <div className={`${field} w-[47px]`}>
            <span className="w-[31px] pb-[2px] pl-[1px] font-['Liberation_Mono',monospace] text-[10.500px] text-[#eee]">0°</span>
            <div className="flex h-full flex-1 items-center justify-center border-l border-[#5e5e5e]"><Chevron /></div>
          </div>
        </div>
      </div>
      <svg width="13" height="16" viewBox="0 0 13 16" className="mt-[12px] ml-[7px]" fill="none" stroke={g} strokeWidth="1.300">
        <path d="M3.500 6V4.500C3.500 1 9 1 9 4.500V7M3.500 9V11.500C3.500 15 9 15 9 11.500V9.500M6.300 5V11M.5 2L12 13.500" />
      </svg>
    </div>
    <div className="mx-[4px] flex h-[124px] shrink-0 items-center justify-center border-y border-[#474747] pr-[2px] text-[10px] text-[#727272]">无形状属性</div>
    <div className="flex flex-col gap-[1px] pt-[2px] pl-[5px]">
      {["缩放圆角", "缩放描边和效果"].map((t) => (
        <label key={t} className="flex h-[16px] items-center gap-[4px] text-[10px] font-bold text-[#e4e4e4]">
          <span className="h-[10px] w-[10px] border border-[#c4c4c4]" />
          {t}
        </label>
      ))}
    </div>
  </div>
);

const dockGroups = [
  {
    h: "h-[83px]",
    gap: "gap-[7px]",
    top: "mt-[5px]",
    icons: [
      <>
        <path d="M1 13.500L5.300 3H7.200L11.500 13.500H9.300L8.300 10.800H4.300L3.300 13.500ZM5 9.200H7.600L6.300 5.500Z" fill={g} stroke={g} strokeWidth=".4" />
        <path d="M13.500 2V14.500" stroke="#999" />
      </>,
      <path key="p" d="M7.500 2.500H12V13.500H10.800V3.800H9.700V13.500H7.700V8.500C1.500 8.500 1.500 2.500 7.500 2.500Z" fill={g} stroke="none" />,
      <g key="o">
        <ellipse cx="7" cy="8" rx="4.500" ry="5.800" transform="rotate(14 7 8)" stroke="#999" strokeWidth="1.600" />
        <path d="M8.500 2.300C2 2.500 .5 13 5.500 13.700" strokeWidth="2" />
      </g>,
    ],
  },
  {
    h: "h-[57px]",
    gap: "gap-[8px]",
    top: "mt-[3px]",
    icons: [
      <>
        <path d="M9.500 2H11L15 12H13L12 9.700H8.500L7.700 12H6ZM9 8.300H11.500L10.200 5Z" fill={g} stroke="none" />
        <path d="M1 7.500H5.500V12H1ZM3.500 10H7V14.500H3.500Z" fill="#535353" />
      </>,
      <>
        <path d="M10 1.500H14V12H12.800V2.800H11.700V12H10.200V7.500C5 7.500 5 1.500 10 1.500Z" fill={g} stroke="none" />
        <path d="M1 7.500H5.500V12H1ZM3.500 10H7V14.500H3.500Z" fill="#535353" />
      </>,
    ],
  },
  {
    h: "h-[57px]",
    gap: "gap-[7px]",
    top: "mt-[4px]",
    icons: [
      <path key="e" d="M6 3.500H1.500V14.500H12.500V10M8 8L13.500 2M9.500 2H14V6.500" strokeWidth="1.700" />,
      <path key="l" d="M8.500 6.500C6 3.500 1 4.500 1 8C1 11.500 6.500 12 8 9M7.500 9.500C10 12.500 15 11.500 15 8C15 4.500 9.500 4 8 7M4 8H7M9 8H12" strokeWidth="1.600" />,
    ],
  },
];

const Dock = () => (
  <div className="flex w-[32px] shrink-0 flex-col border-l-[3px] border-[#3d3d3d] bg-[#535353]">
    <div className="flex h-[11px] shrink-0 justify-end border-b border-[#3b3b3b] bg-[#434343] pt-[3px] pr-[3px]"><DoubleArrow /></div>
    {dockGroups.map((group, i) => (
      <div key={i} className={`${group.h} shrink-0 border-b-2 border-[#444] pt-[2px]`}>
        <Grip className="pl-[7px]" />
        <div className={`flex flex-col items-center pl-[3px] ${group.top} ${group.gap}`}>
          {group.icons.map((icon, k) => <Icon key={k} size={16}>{icon}</Icon>)}
        </div>
      </div>
    ))}
  </div>
);

const handles = [
  [636.5, 333.5], [752.5, 333.5], [868.5, 333.5], [636.5, 348.5],
  [868.5, 348.5], [636.5, 363.5], [752.5, 363.5], [868.5, 363.5],
];

const SelectedText = () => (
  <>
    <div className="absolute top-[332px] left-[637px] whitespace-nowrap font-['Noto_Sans_CJK_SC',sans-serif] text-[29px] leading-[30px] font-black tracking-[4.100px] text-black">滚滚长江东逝水</div>
    <svg width="256" height="36" viewBox="632 330 256 36" className="absolute top-[330px] left-[632px]" fill="none" stroke="#6f94dd">
      <path d="M636.500 333.500H868.500V363.500H636.500ZM637 358.500H868M868.500 348.500H880" />
      {handles.map(([x, y]) => <rect key={`${x}${y}`} x={x - 2} y={y - 2} width="4" height="4" fill="#fff" />)}
      <rect x="635" y="357" width="3" height="3" fill="#3f6fd0" stroke="none" />
      <circle cx="883" cy="348.500" r="3" fill="#fff" />
    </svg>
  </>
);

const SpeedWidget = () => (
  <div className="absolute top-[725px] left-[1464px] isolate flex h-[49px] items-center">
    <div className="relative z-10 flex h-[47px] w-[47px] items-center justify-center rounded-full border border-[#2b303c] bg-[#3c4253] shadow">
      <svg width="47" height="47" viewBox="0 0 47 47" className="absolute top-0 left-0" fill="none">
        <path d="M24 4A20 20 0 0 1 43 30" stroke="url(#speed)" strokeWidth="2" />
        <path d="M43 28A20 20 0 0 1 39 36" stroke="#4fae67" strokeWidth="2" />
        <defs><linearGradient id="speed" x1="0" y1="0" x2="0" y2="1"><stop stopColor="#3fd0c4" /><stop offset="1" stopColor="#63d08b" /></linearGradient></defs>
      </svg>
      <span className="pr-[2px] pb-[2px] font-['Open_Sans',sans-serif] text-[20px] font-light tracking-[-0.5px] text-white">35<span className="text-[10px]">%</span></span>
    </div>
    <div className="-ml-[14px] flex h-[36px] w-[65px] flex-col rounded-r-full bg-[#282d38] pl-[18px] text-white shadow">
      {["#35a7e0", "#2fa32f"].map((c, i) => (
        <div key={c} className={`flex h-[18px] items-center pt-[1px] ${i === 0 ? "border-b border-[#353b48]" : ""}`}>
          <svg width="6" height="6" viewBox="0 0 6 6" fill={c}><path d={i === 0 ? "M3 0L6 3H4V6H2V3H0Z" : "M3 6L6 3H4V0H2V3H0Z"} /></svg>
          <span className="ml-[15px] whitespace-nowrap font-['Liberation_Sans',sans-serif] text-[10px] font-bold">0<span className="text-[9px] font-normal text-[#c4c8d0] italic">K/s</span></span>
        </div>
      ))}
    </div>
  </div>
);

const InputBar = () => (
  <div className="absolute top-[801px] left-[1440px] flex h-[18px] w-[160px] items-center bg-white">
    <svg width="160" height="26" viewBox="1430 796 160 26" className="absolute -top-[5px] -left-[10px]">
      <path d="M1431 801L1450 797.500L1453.500 817L1434.500 820.500Z" fill="#ee5426" />
      <path d="M1448 803C1444 801 1436 802.500 1437.500 806.500C1439 809.500 1448 807.500 1447.500 812C1447 816 1439 816 1436 813.500" fill="none" stroke="#fff" strokeWidth="3" />
    </svg>
    <span className="ml-[19px] font-['Noto_Sans_CJK_SC',sans-serif] text-[12px] leading-none font-bold text-[#1f71bd]">英</span>
    <svg width="128" height="18" viewBox="1471 801 128 18" className="shrink-0" fill="#2271b8">
      <circle cx="1477" cy="807" r="1.500" /><path d="M1482 810h3q1 4-3 5l-.5-1q1.500-1 .5-2Z" />
      <circle cx="1501" cy="810" r="5.500" fill="none" stroke="#2271b8" strokeWidth="1.400" />
      <path d="M1498.500 808v1.500M1503.500 808v1.500M1498 811.500Q1501 815 1504 811.500" fill="none" stroke="#2271b8" strokeWidth="1.300" />
      <rect x="1517.500" y="803" width="5" height="9" rx="2.500" />
      <path d="M1515.500 809Q1515.500 814 1520 814Q1524.500 814 1524.500 809M1520 814V816.500M1517 816.500H1523" fill="none" stroke="#2271b8" strokeWidth="1.200" />
      <rect x="1532" y="805.500" width="12" height="9" rx="1" fill="#fff" stroke="#2271b8" strokeWidth="1.300" />
      <path d="M1534 808H1542.500M1534 810.500H1542.500M1535.500 812.800H1541" stroke="#2271b8" strokeDasharray="1.500 .7" strokeWidth="1.200" />
      <g fill="#b5bdc6"><circle cx="1556.500" cy="806.500" r="2.500" /><path d="M1552 816V812Q1552 809.500 1555 809.500H1558Q1560 809.500 1560 811V816Z" /><path d="M1557 811H1562V816H1557Z" fill="#fff" stroke="#b5bdc6" /></g>
      <path d="M1573 804.500L1569.500 807L1571 810L1572.500 809.500V816H1578.500V809.500L1580 810L1581.500 807L1578 804.500Q1575.500 806.500 1573 804.500Z" />
      <path d="M1587 805H1592V810H1587ZM1587 811.500H1592V816H1587ZM1593.500 811.500H1598V816H1593.500Z" /><path d="M1594 805.500H1598V809.500H1594Z" fill="none" stroke="#2271b8" />
    </svg>
  </div>
);

const Watermark = () => (
  <svg width="300" height="145" viewBox="1220 695 300 145" className="absolute top-[695px] left-[1220px] z-20 opacity-75 drop-shadow-[0_0_1px_rgba(60,60,60,0.6)]" fill="#f4f4f4">
    <text x="1229" y="785" fontSize="64" fontWeight="700" textLength="97" lengthAdjust="spacingAndGlyphs" stroke="#f4f4f4" strokeWidth="3" className="font-['Liberation_Sans',sans-serif]">Bai</text>
    <ellipse cx="1337" cy="732" rx="10.500" ry="13.500" transform="rotate(-8 1337 732)" />
    <ellipse cx="1357" cy="712.300" rx="10" ry="14" />
    <ellipse cx="1382" cy="714" rx="10.500" ry="13.300" transform="rotate(8 1382 714)" />
    <ellipse cx="1398.500" cy="738.500" rx="10.500" ry="13.300" transform="rotate(-6 1398.500 738.500)" />
    <path d="M1367 735C1374 735 1380 740 1384 748C1390 757 1402 762 1402 773C1402 784 1393 788 1383 787.500C1376 785 1360 785 1352 787C1340 788 1332 783 1332 772C1332 762 1343 757 1350 748C1354 740 1360 735 1367 735Z" />
    <g fill="none" stroke="#505050" strokeWidth="5.500">
      <path d="M1362.500 749V777.500H1352Q1345.500 777.500 1345.500 769Q1345.500 761 1352 761H1362" />
      <path d="M1370 758V771Q1370 777.500 1376 777.500H1386V758" />
    </g>
    <text x="1412" y="781" fontSize="48" fontWeight="900" textLength="96" lengthAdjust="spacingAndGlyphs" className="font-['Noto_Sans_CJK_SC',sans-serif]">经验</text>
    <text x="1230" y="823" fontSize="32" textLength="282" lengthAdjust="spacingAndGlyphs" stroke="#f4f4f4" strokeWidth=".8" className="font-['Open_Sans',sans-serif]">jingyan.baidu.com</text>
  </svg>
);

const App = () => (
  <div className="relative flex h-[868px] w-[1600px] flex-col overflow-hidden bg-[#434343] font-['Liberation_Sans','Noto_Sans_CJK_SC',sans-serif]">
    <MenuBar />
    <ControlBar />
    <div className="flex min-h-0 flex-1">
      <Toolbox />
      <div className="flex min-w-0 flex-1 flex-col border-l border-[#3b3b3b]">
        <div className="flex h-[25px] shrink-0 items-center border-t border-[#3b3b3b] bg-[#434343]">
          <div className="flex h-full w-[243px] items-center justify-between bg-[#535353] pr-[5px] pl-[8px]">
            <span className="whitespace-nowrap font-['Open_Sans','Noto_Sans_CJK_SC',sans-serif] text-[10.600px] text-[#e8e8e8]">海报（转曲）.ai* @ 300% (CMYK/GPU 预览)</span>
            <CloseX />
          </div>
        </div>
        <div className="flex h-[775px] shrink-0">
          <div className="flex w-[1494px] flex-col">
            <HRuler />
            <div className="flex h-[761px]">
              <VRuler />
              <div className="flex-1 bg-[#606060]">
                <div className="ml-[400px] h-full w-[568px] border-x border-[#333] bg-white" />
              </div>
            </div>
          </div>
          <div className="flex w-[13px] shrink-0 flex-col items-center bg-[#4b4b4b] pt-[5px]">
            <svg width="7" height="5" viewBox="0 0 7 5" fill="none" stroke="#999" strokeWidth="1.300"><path d="M.5 4L3.500 1L6.500 4" /></svg>
            <div className="mt-[366px] h-[22px] w-[11px] rounded-full bg-[#636363]" />
            <svg width="7" height="5" viewBox="0 0 7 5" className="mt-auto mb-[5px]" fill="none" stroke="#aaa" strokeWidth="1.300"><path d="M.5 1L3.500 4L6.500 1" /></svg>
          </div>
        </div>
        <StatusBar />
      </div>
      <Dock />
    </div>
    <SelectedText />
    <Pathfinder />
    <Transform />
    <SpeedWidget />
    <InputBar />
    <Watermark />
  </div>
);

export default App;
